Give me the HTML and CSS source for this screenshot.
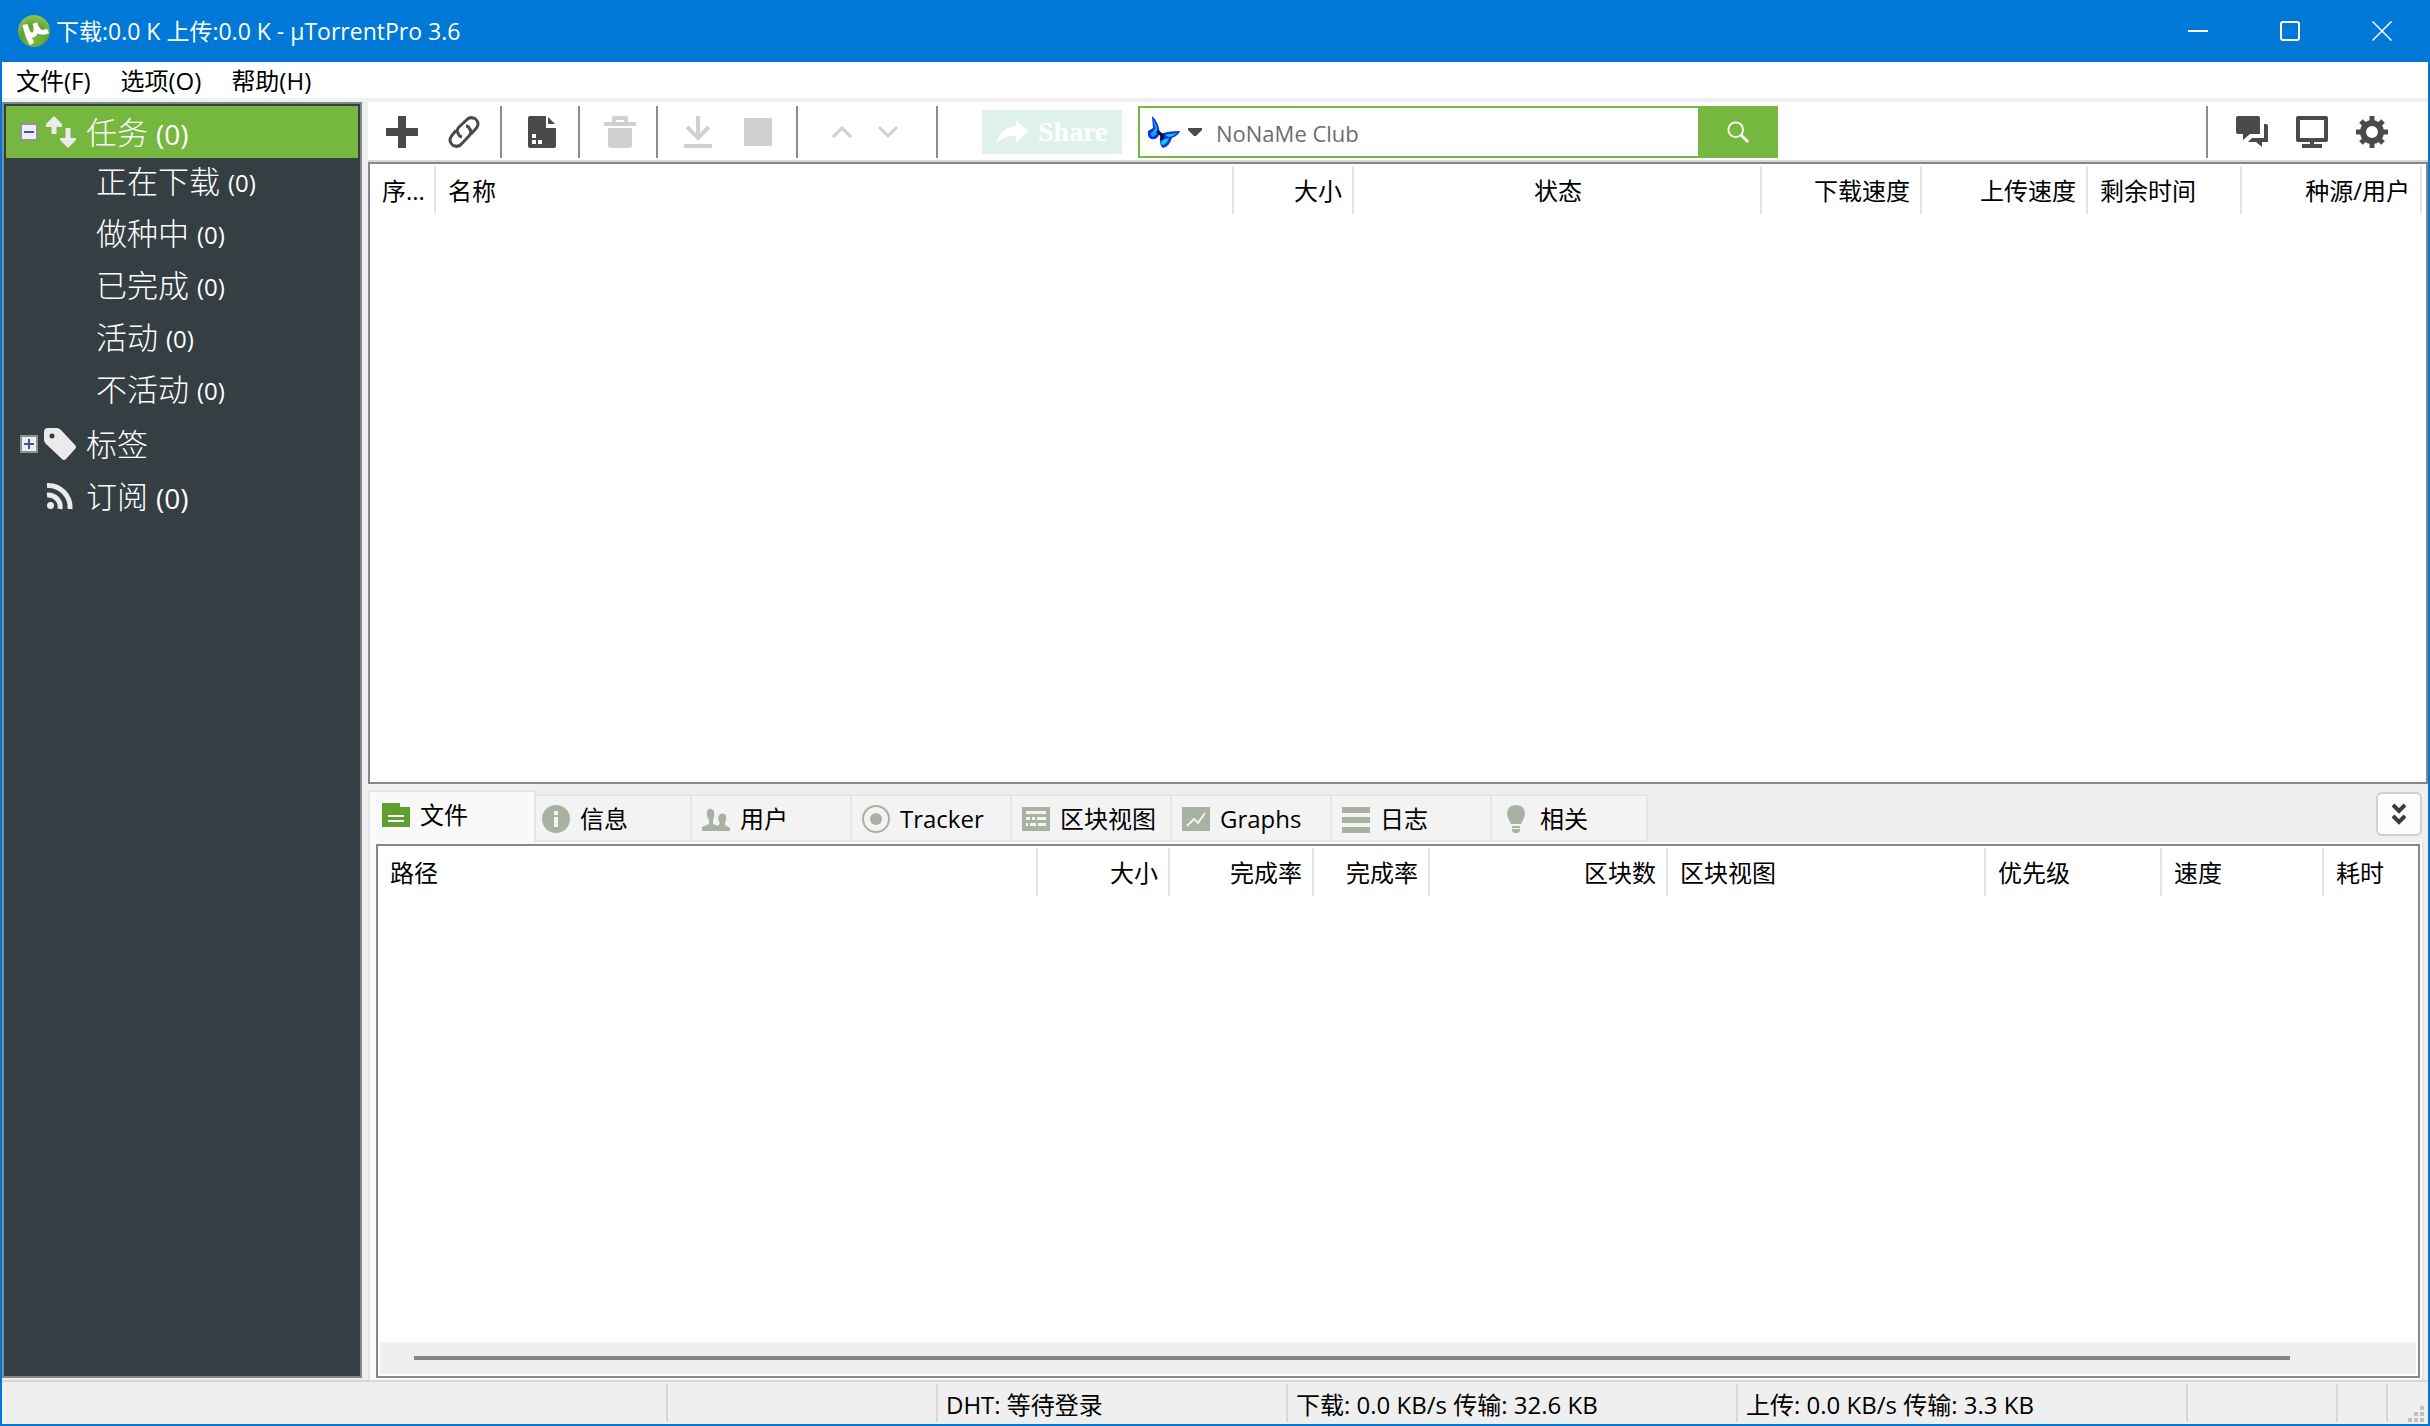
FILE: index.html
```
<!DOCTYPE html>
<html lang="zh-CN">
<head>
    <meta charset="UTF-8">
    <meta name="viewport" content="width=device-width, initial-scale=1.0">
    <title>µTorrentPro 3.6</title>
    <link rel="stylesheet" href="styles.css">
</head>
<body>

    <!-- Title bar -->
    <header class="titlebar">
        <svg class="logo" viewBox="0 0 32 32">
            <defs>
                <radialGradient id="logoFill" cx="50%" cy="75%" r="70%">
                    <stop offset="0" stop-color="#7fb840"/>
                    <stop offset="0.6" stop-color="#62a136"/>
                    <stop offset="1" stop-color="#8cc152"/>
                </radialGradient>
            </defs>
            <circle cx="16" cy="16" r="16" fill="url(#logoFill)"/>
            <path d="M7 9.500Q9 20 14 29M8 12Q10 21 15 20Q20 18 17 8M18.500 12Q21 20 30 16" fill="none" stroke="#fff" stroke-width="5"/>
        </svg>
        <h1>下载:0.0 K 上传:0.0 K - µTorrentPro 3.6</h1>
        <div class="window-buttons">
            <button type="button" aria-label="最小化"><svg viewBox="0 0 20 20"><path d="M0 10H20"/></svg></button>
            <button type="button" aria-label="最大化"><svg viewBox="0 0 20 20"><rect x="1" y="1" width="18" height="18" rx="2"/></svg></button>
            <button type="button" aria-label="关闭"><svg viewBox="0 0 20 20"><path class="thin" d="M0.500 0.500L19.500 19.500M19.500 0.500L0.500 19.500"/></svg></button>
        </div>
    </header>

    <!-- Menu -->
    <nav class="menubar">
        <button type="button">文件(F)</button>
        <button type="button">选项(O)</button>
        <button type="button">帮助(H)</button>
    </nav>

    <div class="workspace">

        <!-- Category tree -->
        <aside class="sidebar">
            <ul class="tree">
                <li>
                    <button type="button" class="tree-row active">
                        <svg class="expander" viewBox="0 0 18 18"><rect x="1" y="1" width="16" height="16" fill="#eee" stroke="#919191" stroke-width="2"/><path d="M4 9H14" stroke="#3c55a5" stroke-width="2"/></svg>
                        <svg class="tree-icon" viewBox="0 0 32 32" fill="#ebebeb"><path d="M10 0L18 8V11H12.500V18H7.500V11H2V8ZM24 32L32 24V22H26.500V12H21.500V22H16V24Z"/></svg>
                        <span>任务</span><span class="count">(0)</span>
                    </button>
                    <ul class="tree-children">
                        <li><button type="button" class="tree-row"><span>正在下载</span><span class="count">(0)</span></button></li>
                        <li><button type="button" class="tree-row"><span>做种中</span><span class="count">(0)</span></button></li>
                        <li><button type="button" class="tree-row"><span>已完成</span><span class="count">(0)</span></button></li>
                        <li><button type="button" class="tree-row"><span>活动</span><span class="count">(0)</span></button></li>
                        <li><button type="button" class="tree-row"><span>不活动</span><span class="count">(0)</span></button></li>
                    </ul>
                </li>
                <li>
                    <button type="button" class="tree-row">
                        <svg class="expander" viewBox="0 0 18 18"><rect x="1" y="1" width="16" height="16" fill="#eee" stroke="#919191" stroke-width="2"/><path d="M4 9H14M9 4V14" stroke="#3c55a5" stroke-width="2"/></svg>
                        <svg class="tree-icon" viewBox="0 0 32 32" fill="#ebebeb"><path fill-rule="evenodd" d="M4 0H13Q15 0 17 2L31 17Q33 19 31 21L22 31Q20 33 18 31L2 16Q0 14 0 12V4Q0 0 4 0ZM8 5.500A2.500 2.500 0 1 0 8 10.500A2.500 2.500 0 1 0 8 5.500Z"/></svg>
                        <span>标签</span>
                    </button>
                </li>
                <li>
                    <button type="button" class="tree-row">
                        <span class="expander"></span>
                        <svg class="tree-icon" viewBox="0 0 32 32" fill="none" stroke="#ebebeb" stroke-width="5"><circle cx="6.500" cy="25.500" r="3.500" fill="#ebebeb" stroke="none"/><path d="M3 15A12 12 0 0 1 16 29M3 5.500A22 22 0 0 1 26 29"/></svg>
                        <span>订阅</span><span class="count">(0)</span>
                    </button>
                </li>
            </ul>
        </aside>

        <main class="main">

            <!-- Toolbar -->
            <div class="toolbar">
                <div class="tool-group add-tools">
                    <button type="button" aria-label="添加"><svg viewBox="0 0 32 32"><path d="M12 0H20V12H32V20H20V32H12V20H0V12H12Z"/></svg></button>
                    <button type="button" aria-label="添加链接"><svg viewBox="0 0 32 32" fill="none" stroke="#4a4a4a" stroke-width="3"><path d="M10 17Q8 14 11 11L19 3.500Q23 0 27.500 3Q32 7 28.500 12L23 18M22 13Q24 17 21 20L13 28.500Q9 32 4.500 29Q0 25 3.500 20L8 14.500" /><path d="M10 16Q10 20 14 21M22 14Q21 10 18 10"/></svg></button>
                </div>
                <div class="tool-group">
                    <button type="button" aria-label="制作种子"><svg viewBox="0 0 32 32"><path fill-rule="evenodd" d="M4 0H20V12H30V30Q30 32 28 32H4Q2 32 2 30V2Q2 0 4 0ZM6 18H10V22H6ZM6 24H10V28H6ZM12 24H16V28H12Z"/><path d="M22 1L29 8H22Z"/></svg></button>
                </div>
                <div class="tool-group">
                    <button type="button" aria-label="删除" disabled><svg viewBox="0 0 32 32"><path d="M0 6H8V2Q8 0 10 0H22Q24 0 24 2V6H32V10H0ZM12 6H20V4H12ZM4 12H28V29Q28 32 25 32H7Q4 32 4 29Z" fill-rule="evenodd"/></svg></button>
                </div>
                <div class="tool-group start-tools">
                    <button type="button" aria-label="开始" disabled><svg viewBox="0 0 32 32"><path d="M2 28H30V32H2Z"/><path d="M16 0V22M5 11L16 22L27 11" fill="none" stroke="#d0d0d0" stroke-width="4"/></svg></button>
                    <button type="button" aria-label="停止" disabled><svg viewBox="0 0 32 32"><rect x="2" y="2" width="28" height="28" rx="1"/></svg></button>
                </div>
                <div class="tool-group move-tools">
                    <button type="button" aria-label="上移" disabled><svg viewBox="0 0 32 32"><path d="M7 21L16 12L25 21" fill="none" stroke="#d0d0d0" stroke-width="3"/></svg></button>
                    <button type="button" aria-label="下移" disabled><svg viewBox="0 0 32 32"><path d="M7 11L16 20L25 11" fill="none" stroke="#d0d0d0" stroke-width="3"/></svg></button>
                </div>
                <button type="button" class="share-button" disabled>
                    <svg viewBox="0 0 32 26" fill="#fff"><path d="M20 1L32 12L20 24V17Q8 16 0 25Q4 9 20 7Z"/></svg>
                    <span>Share</span>
                </button>
                <form class="search" onsubmit="return false">
                    <button type="button" class="engine" aria-label="搜索引擎">
                        <svg class="butterfly" viewBox="0 0 32 32"><path d="M4 0Q10 5 12 17Q10 22 7 23Q1 24 0 19V15L5 12Z" fill="#0a2fe0"/><path d="M5 3Q9 9 10 17L5 21L2 18L7 13Z" fill="#16a6f4"/><path d="M12 18Q20 15 32 15Q31 19 24 22Q21 31 15 32Q12 30 12 24Z" fill="#0a3fd0"/><path d="M17 19L29 17Q26 20 21 21ZM14 24L21 22Q19 28 15 29Q12 28 14 24Z" fill="#19c4f7"/><path d="M9 15L15 20L13 24" fill="none" stroke="#0b1050" stroke-width="3"/></svg>
                        <svg class="caret" viewBox="0 0 14 8"><path d="M0 0H14V2L8 8H6L0 2Z" fill="#4a4a4a"/></svg>
                    </button>
                    <input type="search" aria-label="搜索" placeholder="NoNaMe Club">
                    <button type="submit" class="search-button" aria-label="搜索"><svg viewBox="0 0 24 24" fill="none" stroke="#fff" stroke-width="2"><circle cx="9.500" cy="9.500" r="8"/><path d="M15 15L23 23" stroke-width="3"/></svg></button>
                </form>
                <div class="right-tools">
                    <button type="button" aria-label="聊天"><svg viewBox="0 0 32 32"><path d="M2 0H22Q24 0 24 2V18H14L7 24V18H2Q0 18 0 16V2Q0 0 2 0ZM28 8H30Q32 8 32 10V26H26V31L20 26H12L16 22H28Z"/></svg></button>
                    <button type="button" aria-label="远程"><svg viewBox="0 0 32 32"><path fill-rule="evenodd" d="M2 0H30Q32 0 32 2V24Q32 26 30 26H18V28H26V32H6V28H14V26H2Q0 26 0 24V2Q0 0 2 0ZM4 4V22H28V4Z"/></svg></button>
                    <button type="button" aria-label="设置"><svg viewBox="0 0 32 32"><circle cx="16" cy="16" r="9" fill="none" stroke="#4a4a4a" stroke-width="6"/><path d="M16 0V6M16 26V32M0 16H6M26 16H32M5 5L9 9M23 23L27 27M27 5L23 9M9 23L5 27" stroke="#4a4a4a" stroke-width="5"/></svg></button>
                </div>
            </div>

            <!-- Torrent list -->
            <section class="list torrents">
                <table>
                    <colgroup>
                        <col class="c-num"><col><col class="c-size"><col class="c-status"><col class="c-down"><col class="c-up"><col class="c-eta"><col class="c-peers">
                    </colgroup>
                    <thead>
                        <tr>
                            <th>序...</th>
                            <th>名称</th>
                            <th class="right">大小</th>
                            <th class="center">状态</th>
                            <th class="right">下载速度</th>
                            <th class="right">上传速度</th>
                            <th>剩余时间</th>
                            <th class="right">种源/用户</th>
                        </tr>
                    </thead>
                </table>
            </section>

            <!-- Details -->
            <section class="details">
                <div class="tabstrip">
                    <div class="tabs" role="tablist">
                        <button type="button" role="tab" class="tab selected" aria-selected="true">
                            <svg viewBox="0 0 28 28"><path fill-rule="evenodd" d="M0 2H18V6H28V26H0ZM6 14V16H22V14ZM6 19V21H22V19Z"/></svg>文件</button>
                        <button type="button" role="tab" class="tab">
                            <svg viewBox="0 0 28 28"><circle cx="14" cy="14" r="14"/><path d="M12 6H16V10H12ZM12 12H16V22H12Z" fill="#f3f3f3"/></svg>信息</button>
                        <button type="button" role="tab" class="tab">
                            <svg viewBox="0 0 28 28"><path d="M0 26V22L7 19V15Q4 11 5 6Q8 1 12 6Q13 11 11 15V19L16 21L18 18Q15 14 17 10Q20 7 24 10Q25 14 23 18V20L28 23V26Z"/></svg>用户</button>
                        <button type="button" role="tab" class="tab">
                            <svg viewBox="0 0 28 28"><circle cx="14" cy="14" r="13" fill="none" stroke="#a9b1a2" stroke-width="2"/><circle cx="14" cy="14" r="6"/></svg>Tracker</button>
                        <button type="button" role="tab" class="tab">
                            <svg viewBox="0 0 28 28"><path fill-rule="evenodd" d="M0 2H28V26H0ZM4 6V9H24V6ZM4 12V15H8V12ZM10 12V15H13V12ZM15 12V15H24V12ZM4 18V21H6V18ZM8 18V21H14V18ZM16 18V21H24V18Z"/></svg>区块视图</button>
                        <button type="button" role="tab" class="tab">
                            <svg viewBox="0 0 28 28"><path d="M0 2H28V26H0Z"/><path d="M5 21L12 14L16 18L23 8" fill="none" stroke="#f3f3f3" stroke-width="2"/></svg>Graphs</button>
                        <button type="button" role="tab" class="tab">
                            <svg viewBox="0 0 28 28"><path d="M0 2H28V8H0ZM0 12H28V18H0ZM0 22H28V28H0Z"/></svg>日志</button>
                        <button type="button" role="tab" class="tab">
                            <svg viewBox="0 0 28 28"><path d="M14 0Q23 0 23 10Q22 14 19 19H9Q6 14 5 10Q5 0 14 0ZM10 21H18V23H10ZM10 24H18V26L16 28H12L10 26Z"/></svg>相关</button>
                    </div>
                    <button type="button" class="collapse" aria-label="收起"><svg viewBox="0 0 14 22"><path d="M1 2L7 8L13 2M1 13L7 19L13 13" fill="none" stroke="#333d42" stroke-width="4"/></svg></button>
                </div>
                <div class="tab-page">
                    <div class="list files">
                        <table>
                            <colgroup>
                                <col><col class="f-size"><col class="f-done"><col class="f-pct"><col class="f-count"><col class="f-view"><col class="f-prio"><col class="f-rate"><col class="f-time">
                            </colgroup>
                            <thead>
                                <tr>
                                    <th>路径</th>
                                    <th class="right">大小</th>
                                    <th class="right">完成率</th>
                                    <th class="right">完成率</th>
                                    <th class="right">区块数</th>
                                    <th>区块视图</th>
                                    <th>优先级</th>
                                    <th>速度</th>
                                    <th>耗时</th>
                                </tr>
                            </thead>
                        </table>
                        <div class="scrollbar"><div class="thumb"></div></div>
                    </div>
                </div>
            </section>
        </main>
    </div>

    <!-- Status bar -->
    <footer class="statusbar">
        <div class="s-message"></div>
        <div class="s-blank"></div>
        <div class="s-dht">DHT: 等待登录</div>
        <div class="s-down">下载: 0.0 KB/s 传输: 32.6 KB</div>
        <div class="s-up">上传: 0.0 KB/s 传输: 3.3 KB</div>
        <div class="s-extra"></div>
        <div class="s-small"></div>
        <div class="s-grip"><svg viewBox="0 0 16 16" fill="#bfbfbf"><path d="M12 0H16V4H12ZM6 6H10V10H6ZM12 6H16V10H12ZM0 12H4V16H0ZM6 12H10V16H6ZM12 12H16V16H12Z"/></svg></div>
    </footer>

</body>
</html>
```
FILE: styles.css
```
* {
    box-sizing: border-box;
    margin: 0;
    padding: 0;
}

body {
    height: 100vh;
    display: flex;
    flex-direction: column;
    border: 2px solid #0078d7;
    border-top: none;
    background-color: #efefef;
    color: #000;
    font-family: "Open Sans", "Noto Sans CJK SC", sans-serif;
    font-size: 24px;
    line-height: 32px;
    overflow: hidden;
}

button {
    border: none;
    background: none;
    color: inherit;
    font: inherit;
}

svg {
    display: block;
    flex: none;
}

ul {
    list-style: none;
}

/* Title bar */
.titlebar {
    display: flex;
    align-items: center;
    height: 62px;
    flex: none;
    padding-left: 16px;
    background-color: #0078d7;
    color: #fff;
}

.logo {
    width: 32px;
    height: 32px;
    margin-right: 6px;
}

.titlebar h1 {
    font-size: 23px;
    font-weight: normal;
}

.window-buttons {
    display: flex;
    margin-left: auto;
}

.window-buttons button {
    width: 92px;
    height: 60px;
    display: flex;
    align-items: center;
    justify-content: center;
}

.window-buttons svg {
    width: 20px;
    height: 20px;
    fill: none;
    stroke: #fff;
    stroke-width: 2;
}

.window-buttons .thin {
    stroke-width: 1.5;
}

/* Menu */
.menubar {
    display: flex;
    gap: 30px;
    height: 40px;
    flex: none;
    padding: 2px 14px 0;
    background-color: #fff;
    border-bottom: 4px solid #f0f0f0;
}

.workspace {
    flex: 1;
    min-height: 0;
    display: flex;
    gap: 6px;
}

/* Category tree */
.sidebar {
    width: 360px;
    flex: none;
    margin-bottom: 2px;
    padding: 2px;
    border: 2px solid #828790;
    background-color: #343e43;
    color: #fff;
    font-size: 31px;
    font-weight: 300;
}

.tree-row {
    display: flex;
    align-items: center;
    width: 352px;
    height: 52px;
    padding-left: 14px;
}

.tree-row.active {
    background-color: #76b73f;
}

.expander {
    width: 18px;
    height: 18px;
    margin-right: 6px;
}

.tree-icon {
    width: 32px;
    height: 32px;
    margin-right: 10px;
}

.count {
    margin-left: 8px;
    padding-top: 4px;
    font-size: 28px;
    font-weight: normal;
}

.tree-children .tree-row {
    padding-left: 90px;
    padding-bottom: 6px;
}

.tree-children .count {
    font-size: 24px;
}

.main {
    flex: 1;
    min-width: 0;
    display: flex;
    flex-direction: column;
}

/* Toolbar */
.toolbar {
    display: flex;
    align-items: center;
    height: 60px;
    flex: none;
    padding-top: 2px;
    background-color: #fff;
    border-bottom: 2px solid #d8d8d8;
}

.toolbar button {
    display: flex;
    align-items: center;
}

.toolbar svg {
    width: 32px;
    height: 32px;
}

.tool-group,
.right-tools {
    display: flex;
    align-items: center;
    height: 52px;
    fill: #4a4a4a;
}

.tool-group {
    padding: 0 20px 0 24px;
    border-right: 2px solid #8c8c8c;
}

.tool-group button:disabled {
    fill: #d0d0d0;
}

.add-tools {
    gap: 30px;
    padding: 0 20px 0 18px;
}

.start-tools {
    gap: 28px;
    padding-right: 22px;
}

.move-tools {
    gap: 14px;
    padding: 0 32px 0 28px;
}

.share-button {
    gap: 10px;
    width: 140px;
    height: 44px;
    margin: 0 16px 0 44px;
    padding-left: 14px;
    background-color: #dff2e9;
    color: #fff;
    font-family: "Liberation Serif", serif;
    font-size: 28px;
    font-weight: bold;
}

.search {
    display: flex;
    width: 640px;
    height: 52px;
}

.engine {
    gap: 8px;
    width: 78px;
    padding-left: 8px;
    border: 2px solid #76b73f;
    border-right: none;
}

.toolbar .caret {
    width: 14px;
    height: 8px;
}

.search input {
    flex: 1;
    min-width: 0;
    padding-top: 2px;
    border: 2px solid #76b73f;
    border-left: none;
    border-right: none;
    background-color: #fff;
    font: inherit;
    font-size: 22px;
    outline: none;
}

.search input::placeholder {
    color: #6d6d6d;
}

.search-button {
    justify-content: center;
    width: 80px;
    background-color: #76b73f;
}

.toolbar .search-button svg {
    width: 22px;
    height: 22px;
}

.right-tools {
    gap: 28px;
    margin-left: auto;
    padding: 0 40px 0 28px;
    border-left: 2px solid #8c8c8c;
}

/* Lists */
.list {
    background-color: #fff;
    border: 2px solid #828790;
    padding-top: 2px;
}

.torrents {
    flex: 1;
    min-height: 0;
    padding-right: 4px;
}

.list table {
    width: 100%;
    table-layout: fixed;
    border-collapse: separate;
    border-spacing: 0;
}

.list th {
    height: 48px;
    padding: 2px 10px 0 12px;
    border-right: 2px solid #e5e5e5;
    font-weight: normal;
    text-align: left;
    white-space: nowrap;
}

.list th.right {
    text-align: right;
}

.list th.center {
    text-align: center;
}

.c-num { width: 66px; }
.c-size { width: 120px; }
.c-status { width: 408px; }
.c-down { width: 160px; }
.c-up { width: 166px; }
.c-eta { width: 154px; }
.c-peers { width: 180px; }

.f-size { width: 132px; }
.f-done { width: 144px; }
.f-pct { width: 116px; }
.f-count { width: 238px; }
.f-view { width: 318px; }
.f-prio { width: 176px; }
.f-rate { width: 162px; }
.f-time { width: 94px; }

/* Details */
.details {
    height: 596px;
    flex: none;
    display: flex;
    flex-direction: column;
}

.tabstrip {
    display: flex;
    align-items: flex-end;
    justify-content: space-between;
    height: 58px;
    flex: none;
    padding-right: 6px;
}

.tabs {
    display: flex;
    align-items: flex-end;
}

.tab {
    display: flex;
    align-items: center;
    gap: 10px;
    width: 160px;
    height: 48px;
    padding: 2px 0 0 10px;
    background-color: #f3f3f3;
    border: 2px solid #e5e5e5;
    border-left: none;
    white-space: nowrap;
}

.tab svg {
    width: 28px;
    height: 28px;
    fill: #a9b1a2;
}

.tab:last-child {
    width: 156px;
}

/* the selected tab overlaps its neighbour */
.tab.selected {
    position: relative;
    z-index: 1;
    width: 168px;
    height: 52px;
    margin-right: -4px;
    padding: 0 0 4px 12px;
    background-color: #f9f9f9;
    border-left: 2px solid #e5e5e5;
    border-bottom: none;
}

.tab.selected svg {
    fill: #5f9e31;
}

.collapse {
    display: flex;
    align-items: center;
    justify-content: center;
    width: 46px;
    height: 44px;
    margin-bottom: 6px;
    background-color: #fdfdfd;
    border: 2px solid #d0d0d0;
    border-radius: 6px;
}

.collapse svg {
    width: 14px;
    height: 22px;
}

.tab-page {
    flex: 1;
    display: flex;
    margin-right: 4px;
    padding: 2px 2px 2px 6px;
    background-color: #f9f9f9;
    border: 2px solid #e5e5e5;
    border-top: none;
    border-bottom: none;
}

.files {
    flex: 1;
    display: flex;
    flex-direction: column;
}

.files th:last-child {
    border-right: none;
}

.scrollbar {
    height: 32px;
    margin: auto 2px 2px;
    padding: 14px 126px 0 34px;
    background-color: #efefef;
}

.thumb {
    height: 4px;
    background-color: #858585;
}

/* Status bar */
.statusbar {
    display: flex;
    height: 44px;
    flex: none;
    padding: 2px 0;
    border-top: 2px solid #d7d7d7;
}

.statusbar div {
    height: 38px;
    padding: 5px 0 0 8px;
    border-right: 2px solid #d7d7d7;
    white-space: nowrap;
}

.statusbar .s-message { flex: 1; }
.s-blank { width: 270px; }
.s-dht { width: 350px; }
.s-down { width: 450px; }
.s-up { width: 450px; }
.s-extra { width: 150px; }
.s-small { width: 50px; }

.statusbar .s-grip {
    display: flex;
    align-items: flex-end;
    justify-content: flex-end;
    width: 40px;
    padding: 0 4px 0 0;
    border-right: none;
}

.s-grip svg {
    width: 16px;
    height: 16px;
}
```
